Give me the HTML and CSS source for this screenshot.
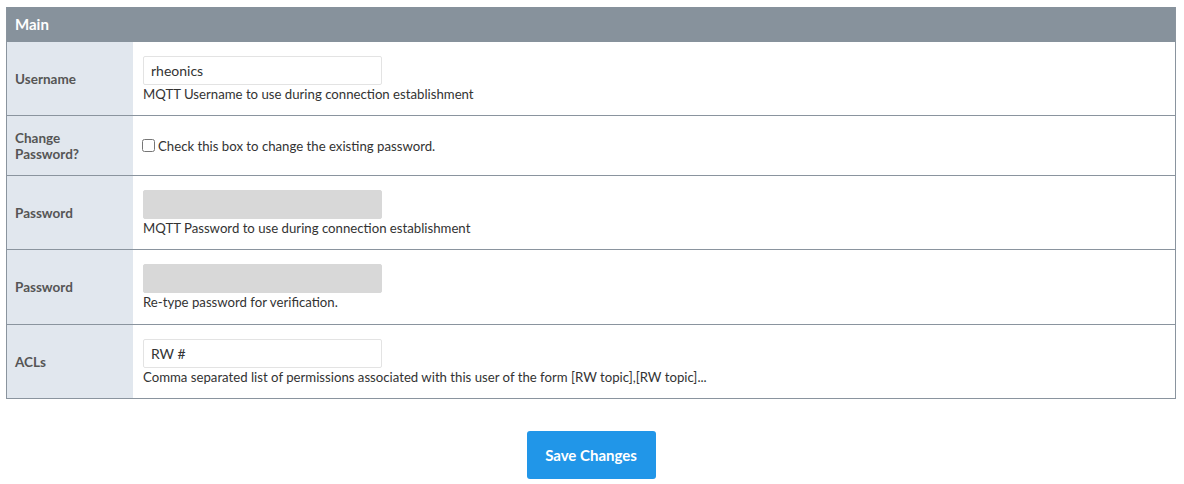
FILE: index.html
```html
<!DOCTYPE html>
<html>
<head>
<meta charset="utf-8">
<link rel="stylesheet" href="styles.css">
</head>
<body>
<div class="panel">
  <div class="panel-head">Main</div>
  <div class="row">
    <div class="label">Username</div>
    <div class="field">
      <input class="text" type="text" value="rheonics">
      <div class="help">MQTT Username to use during connection establishment</div>
    </div>
  </div>
  <div class="row row-check">
    <div class="label">Change<br>Password?</div>
    <div class="field">
      <label class="check"><input type="checkbox"><span>Check this box to change the existing password.</span></label>
    </div>
  </div>
  <div class="row">
    <div class="label">Password</div>
    <div class="field">
      <input class="text" type="password" disabled>
      <div class="help">MQTT Password to use during connection establishment</div>
    </div>
  </div>
  <div class="row row-tall">
    <div class="label">Password</div>
    <div class="field">
      <input class="text" type="password" disabled>
      <div class="help">Re-type password for verification.</div>
    </div>
  </div>
  <div class="row">
    <div class="label">ACLs</div>
    <div class="field">
      <input class="text" type="text" value="RW #">
      <div class="help">Comma separated list of permissions associated with this user of the form [RW topic],[RW topic]...</div>
    </div>
  </div>
</div>
<div class="actions">
  <button class="btn">Save Changes</button>
</div>
</body>
</html>
```
FILE: styles.css
```css
* { box-sizing: border-box; }
body {
  margin: 0;
  padding: 7px 8px 0 6px;
  font-family: Lato, "Open Sans", sans-serif;
  font-size: 14px;
  color: #333;
  background: #fff;
}
.panel {
  width: 1170px;
  border: 1px solid #8a949e;
  border-top: 0;
}
.panel-head {
  background: #87929c;
  color: #fff;
  font-weight: bold;
  font-size: 15px;
  height: 35px;
  line-height: 35px;
  padding-left: 8px;
}
.row {
  display: flex;
  border-bottom: 1px solid #8a949e;
}
.row:last-child { border-bottom: 0; }
.label {
  width: 126px;
  flex: none;
  background: #e1e7ee;
  color: #555;
  font-weight: bold;
  font-size: 13.5px;
  line-height: 16px;
  padding: 0 8px;
  display: flex;
  align-items: center;
}
.field {
  flex: 1;
  padding: 14px 10px 12px;
}
.row-tall .field { padding-bottom: 13px; }
.text {
  display: block;
  width: 239px;
  height: 29px;
  margin: 0;
  border: 1px solid #e3e3e3;
  border-radius: 2px;
  padding: 0 7px;
  font-family: inherit;
  font-size: 14px;
  color: #333;
  background: #fff;
}
.text:disabled {
  background: #d8d8d8;
  border-color: #d8d8d8;
}
.help {
  font-size: 13.2px;
  line-height: 18px;
  color: #333;
}
.row-check { height: 60px; }
.row-check .field {
  padding: 0 9px;
  display: flex;
  align-items: center;
}
.check {
  display: flex;
  align-items: center;
  font-size: 13.2px;
}
.check input {
  margin: 0 3px 0 0;
  width: 13px;
  height: 13px;
}
.actions {
  display: flex;
  justify-content: center;
  padding-top: 32px;
  width: 1170px;
}
.btn {
  width: 129px;
  height: 48px;
  border: 0;
  border-radius: 3px;
  background: #2196e8;
  color: #fff;
  font-family: inherit;
  font-weight: bold;
  font-size: 15px;
}
```
